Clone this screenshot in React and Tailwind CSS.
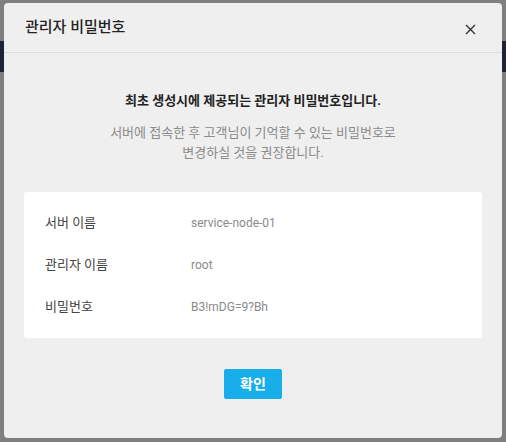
import React from "react";

const font = { fontFamily: "Roboto, 'Noto Sans CJK KR', sans-serif" };

function Row({ label, value }) {
  return (
    <div className="flex items-center h-5 leading-5">
      <div className="w-[146px] text-[13px] text-[#444]">{label}</div>
      <div className="text-[12px] text-[#8a8a8a]">{value}</div>
    </div>
  );
}

export default function App() {
  return (
    <div className="relative w-[506px] h-[442px] overflow-hidden bg-[#7f7f7f]" style={font}>
      <div className="mt-[41px] h-[31px] bg-[#1e2339]" />
      <div className="absolute left-[4px] top-[3px] w-[498px] h-[435px] rounded-[4px] bg-[#efefef] flex flex-col">
        <div className="h-[50px] shrink-0 flex items-center justify-between border-b border-[#dcdcdc] pl-[21px] pr-[26px]">
          <div className="text-[15px] font-medium text-[#222] leading-5 pb-[1px]">관리자 비밀번호</div>
          <svg width="11" height="11" viewBox="0 0 11 11" className="mt-[3px]">
            <path d="M1 1 L10 10 M10 1 L1 10" stroke="#333" strokeWidth="1.4" fill="none" />
          </svg>
        </div>
        <div className="flex flex-col items-center pt-[38px] px-[20px]">
          <div className="text-[13px] leading-5 font-bold text-[#222]">
            최초 생성시에 제공되는 관리자 비밀번호입니다.
          </div>
          <div className="mt-[12px] text-[13px] leading-5 text-[#8a8a8a] text-center">
            서버에 접속한 후 고객님이 기억할 수 있는 비밀번호로
            <br />
            변경하실 것을 권장합니다.
          </div>
          <div className="mt-[29px] w-full bg-white rounded-[3px] px-[21px] py-[21px] flex flex-col gap-[22px]">
            <Row label="서버 이름" value="service-node-01" />
            <Row label="관리자 이름" value="root" />
            <Row label="비밀번호" value="B3!mDG=9?Bh" />
          </div>
          <button className="mt-[31px] h-[30px] w-[58px] rounded-[2px] bg-[#17aee9] text-white text-[14px] font-bold flex items-center justify-center">
            확인
          </button>
        </div>
      </div>
    </div>
  );
}
